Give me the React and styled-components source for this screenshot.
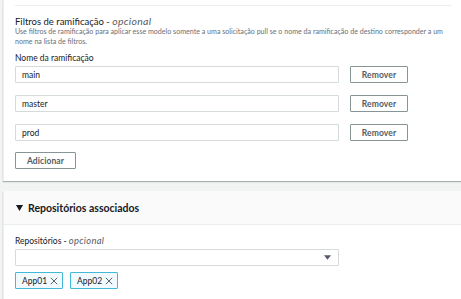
import React from "react";
import styled, { createGlobalStyle } from "styled-components";

const Global = createGlobalStyle`
  html, body { margin: 0; padding: 0; background: #f2f3f3; overflow: hidden; }
  body { font-family: Lato, "Open Sans", sans-serif; color: #16191f; }
  * { box-sizing: border-box; }
`;

const Page = styled.div`
  width: 461px;
  height: 299px;
  padding-left: 3px;
  display: flex;
  flex-direction: column;
  gap: 10px;
  overflow: hidden;
`;

const Card = styled.section`
  width: 480px;
  background: #fff;
  border-left: 1px solid #eaeded;
  box-shadow: 0 1px 1px 0 rgba(0, 28, 36, 0.3);
  flex-shrink: 0;
`;

const Body = styled.div`
  padding: 0 0 12px 11px;
  display: flex;
  flex-direction: column;
`;

const Divider = styled.div`
  margin-top: 5px;
  width: 436px;
  height: 1px;
  background: #eaeded;
`;

const Title = styled.div`
  margin-top: 11px;
  height: 10px;
  font-size: 9.5px;
  line-height: 10px;
  color: #16191f;
`;

const Optional = styled.i`
  color: #545b64;
  font-size: 1.1em;
  line-height: 0;
  letter-spacing: 0.3px;
`;

const Desc = styled.div`
  font-size: 7.1px;
  line-height: 10px;
  color: #687078;
  white-space: nowrap;
`;

const Label = styled.div`
  margin-top: ${(p) => p.$mt || 6}px;
  height: 10px;
  font-size: 8.5px;
  line-height: 10px;
  color: #16191f;
`;

const Rows = styled.div`
  margin-top: 3px;
  display: flex;
  flex-direction: column;
  gap: 12px;
`;

const Row = styled.div`
  display: flex;
  align-items: center;
  gap: 11px;
`;

const Input = styled.div`
  width: 324px;
  height: 17px;
  border: 1px solid #d5dbdb;
  border-radius: 1px;
  padding-left: 6px;
  display: flex;
  align-items: center;
  justify-content: space-between;
  padding-right: 7px;
  font-size: 8.5px;
  color: #16191f;
  background: #fff;
`;

const Button = styled.div`
  width: ${(p) => p.$w}px;
  height: 17px;
  border: 1px solid #879596;
  border-radius: 1px;
  display: flex;
  align-items: center;
  justify-content: center;
  font-size: 8.5px;
  font-weight: 700;
  color: #545b64;
  background: #fff;
  letter-spacing: 0.1px;
`;

const AddWrap = styled.div`
  margin-top: 11px;
  display: flex;
`;

const Header = styled.div`
  height: 34px;
  background: #fafafa;
  border-bottom: 1px solid #eaeded;
  display: flex;
  align-items: center;
  padding-left: 12px;
  gap: 5px;
  font-size: 10.5px;
  font-weight: 700;
  color: #16191f;
`;

const Caret = styled.svg`
  width: 7px;
  height: 6px;
  fill: #16191f;
`;

const Tokens = styled.div`
  margin-top: 6px;
  display: flex;
  gap: 7px;
  padding-bottom: 12px;
`;

const Token = styled.div`
  width: 48px;
  height: 17px;
  border: 1px solid #44b9d6;
  background: #f1faff;
  border-radius: 1px;
  display: flex;
  align-items: center;
  justify-content: space-between;
  padding: 0 4px 0 6px;
  font-size: 8.5px;
  color: #16191f;
`;

const X = () => (
  <svg width="8" height="8" viewBox="0 0 10 10">
    <path d="M1 1 L9 9 M9 1 L1 9" stroke="#545b64" strokeWidth="1.2" fill="none" />
  </svg>
);

const SelectArrow = () => (
  <svg width="7" height="5" viewBox="0 0 8 5">
    <path d="M0 0 H8 L4 5 Z" fill="#545b64" />
  </svg>
);

export default function App() {
  const branches = ["main", "master", "prod"];
  return (
    <>
      <Global />
      <Page>
        <Card>
          <Body>
            <Divider />
            <Title>
              Filtros de ramificação - <Optional>opcional</Optional>
            </Title>
            <Desc>
              Use filtros de ramificação para aplicar esse modelo somente a uma solicitação pull se o nome da ramificação de destino corresponder a um
              <br />
              nome na lista de filtros.
            </Desc>
            <Label>Nome da ramificação</Label>
            <Rows>
              {branches.map((b) => (
                <Row key={b}>
                  <Input>{b}</Input>
                  <Button $w={58}>Remover</Button>
                </Row>
              ))}
            </Rows>
            <AddWrap>
              <Button $w={61}>Adicionar</Button>
            </AddWrap>
          </Body>
        </Card>
        <Card>
          <Header>
            <Caret viewBox="0 0 7 6">
              <path d="M0 0 H7 L3.5 6 Z" />
            </Caret>
            Repositórios associados
          </Header>
          <Body>
            <Label $mt={11}>
              Repositórios - <Optional>opcional</Optional>
            </Label>
            <Rows>
              <Input>
                <span />
                <SelectArrow />
              </Input>
            </Rows>
            <Tokens>
              <Token>
                App01 <X />
              </Token>
              <Token>
                App02 <X />
              </Token>
            </Tokens>
          </Body>
        </Card>
      </Page>
    </>
  );
}
